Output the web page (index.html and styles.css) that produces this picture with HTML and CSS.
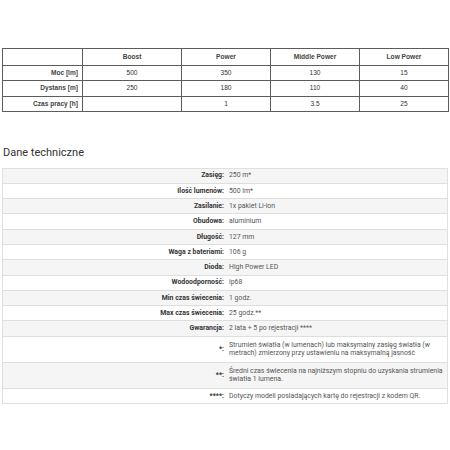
FILE: index.html
```html
<!DOCTYPE html>
<html lang="pl">
<head>
<meta charset="utf-8">
<link rel="stylesheet" href="styles.css">
</head>
<body>
<table class="modes">
  <colgroup>
    <col class="c-label"><col class="c-boost"><col class="c-mode"><col class="c-mode"><col class="c-mode">
  </colgroup>
  <tr class="head"><th></th><th>Boost</th><th>Power</th><th>Middle Power</th><th>Low Power</th></tr>
  <tr><th class="rl">Moc [lm]</th><td>500</td><td>350</td><td>130</td><td>15</td></tr>
  <tr><th class="rl">Dystans [m]</th><td>250</td><td>180</td><td>110</td><td>40</td></tr>
  <tr><th class="rl">Czas pracy [h]</th><td></td><td>1</td><td>3.5</td><td>25</td></tr>
</table>

<h2 class="title">Dane techniczne</h2>

<table class="specs">
  <tr><th>Zasięg:</th><td>250 m*</td></tr>
  <tr><th>Ilość lumenów:</th><td>500 lm*</td></tr>
  <tr><th>Zasilanie:</th><td>1x pakiet Li-ion</td></tr>
  <tr><th>Obudowa:</th><td>aluminium</td></tr>
  <tr><th>Długość:</th><td>127 mm</td></tr>
  <tr><th>Waga z bateriami:</th><td>106 g</td></tr>
  <tr><th>Dioda:</th><td>High Power LED</td></tr>
  <tr><th>Wodoodporność:</th><td>ip68</td></tr>
  <tr><th>Min czas świecenia:</th><td>1 godz.</td></tr>
  <tr><th>Max czas świecenia:</th><td>25 godz.**</td></tr>
  <tr><th>Gwarancja:</th><td>2 lata + 5 po rejestracji ****</td></tr>
  <tr class="multi"><th>*:</th><td>Strumień światła (w lumenach) lub maksymalny zasięg światła (w metrach) zmierzony przy ustawieniu na maksymalną jasność</td></tr>
  <tr class="multi"><th>**:</th><td>Średni czas świecenia na najniższym stopniu do uzyskania strumienia światła 1 lumena.</td></tr>
  <tr><th>****:</th><td>Dotyczy modeli posiadających kartę do rejestracji z kodem QR.</td></tr>
</table>
</body>
</html>
```

FILE: styles.css
```css
html, body {
  margin: 0;
  background: #ffffff;
}
body {
  padding: 48px 2px 0 2px;
  width: 446px;
}

.modes {
  width: 446px;
  border-collapse: collapse;
  table-layout: fixed;
  font-family: "Liberation Sans", Arial, sans-serif;
  font-size: 6.6px;
  color: #333333;
  border: 1px solid #555555;
}
.c-label { width: 80px; }
.c-boost { width: 99px; }
.c-mode { width: 89px; }

.modes th, .modes td {
  border: 1px solid #5c5c5c;
  height: 14.5px;
  padding: 0 4px;
  text-align: center;
  line-height: 8px;
}
.modes .head th {
  height: 15.5px;
  font-weight: bold;
  color: #444444;
}
.modes th.rl {
  text-align: right;
  font-weight: bold;
  color: #444444;
}
.modes td { font-weight: normal; }

.title {
  margin: 34px 0 8.5px 1px;
  font-family: Roboto, "Noto Sans", sans-serif;
  font-weight: 400;
  font-size: 11px;
  line-height: 13px;
  color: #333333;
}

.specs {
  width: 446px;
  border-collapse: collapse;
  table-layout: fixed;
  font-family: Roboto, "Noto Sans", sans-serif;
  font-size: 6.9px;
  color: #555555;
  border: 1px solid #e0e0e0;
}
.specs tr:nth-child(odd) { background: #f5f5f5; }
.specs tr:nth-child(even) { background: #ffffff; }
.specs th, .specs td {
  border-bottom: 1px solid #dedede;
  height: 14.3px;
  line-height: 8.5px;
  vertical-align: middle;
}
.specs th {
  width: 219px;
  padding: 0 2px 0 2px;
  text-align: right;
  font-weight: 700;
  color: #333333;
}
.specs td {
  padding: 0 1px 0 3px;
  text-align: left;
}
.specs .multi td {
  padding-top: 4px;
  padding-bottom: 4px;
}
```
